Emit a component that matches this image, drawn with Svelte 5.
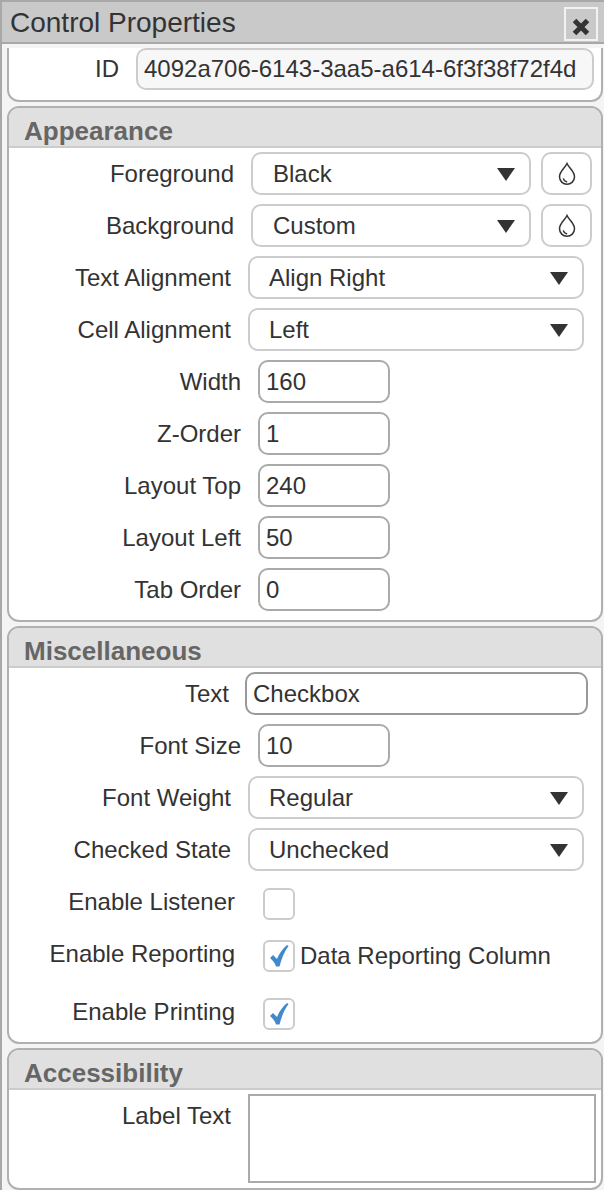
<script>
  const appearanceInputs = [
    { label: 'Width', value: '160' },
    { label: 'Z-Order', value: '1' },
    { label: 'Layout Top', value: '240' },
    { label: 'Layout Left', value: '50' },
    { label: 'Tab Order', value: '0' }
  ];
</script>

{#snippet chevron()}
  <svg class="caret" width="18" height="13" viewBox="0 0 18 13"><path d="M0 0h18L9 13z" fill="#333" /></svg>
{/snippet}

{#snippet drop()}
  <svg width="18" height="24" viewBox="0 0 18 24" fill="none" stroke="#333" stroke-width="1.5">
    <path d="M9 1.500C7 6 1.500 9 1.500 14.800a7.500 7.500 0 0 0 15 0C16.500 9 11 6 9 1.500z" />
    <path d="M5.500 17c.5 1.500 1.500 2.300 3 2.800" stroke-linecap="round" />
  </svg>
{/snippet}

{#snippet tick()}
  <svg width="19" height="22" viewBox="0 0 19 22"><path d="M0 13l3-3 4 4C9 9 12 4 17 0l1.500 1C14 7 11.500 14 9.500 21.500H6C5 18 3 15.500 0 13z" fill="#4289cb" /></svg>
{/snippet}

<div class="window">
  <header class="titlebar">
    <span class="title">Control Properties</span>
    <button class="close" aria-label="Close">
      <svg width="18" height="18" viewBox="0 0 18 18"><path d="M2.500 2.500l13 13M15.500 2.500l-13 13" stroke="#333" stroke-width="5" /></svg>
    </button>
  </header>

  <div class="content">
    <section class="panel first">
      <div class="row id-row">
        <span class="label">ID</span>
        <input class="field id-field" value="4092a706-6143-3aa5-a614-6f3f38f72f4d" readonly />
      </div>
    </section>

    <section class="panel">
      <h2>Appearance</h2>
      <div class="body">
        <div class="row color-row">
          <span class="label">Foreground</span>
          <div class="select color-select"><span>Black</span>{@render chevron()}</div>
          <button class="drop">{@render drop()}</button>
        </div>
        <div class="row color-row">
          <span class="label">Background</span>
          <div class="select color-select"><span>Custom</span>{@render chevron()}</div>
          <button class="drop">{@render drop()}</button>
        </div>
        <div class="row select-row">
          <span class="label">Text Alignment</span>
          <div class="select"><span>Align Right</span>{@render chevron()}</div>
        </div>
        <div class="row select-row">
          <span class="label">Cell Alignment</span>
          <div class="select"><span>Left</span>{@render chevron()}</div>
        </div>
        {#each appearanceInputs as item}
          <div class="row short-row">
            <span class="label">{item.label}</span>
            <input class="field short" value={item.value} />
          </div>
        {/each}
      </div>
    </section>

    <section class="panel">
      <h2>Miscellaneous</h2>
      <div class="body">
        <div class="row text-row">
          <span class="label">Text</span>
          <input class="field text-field" value="Checkbox" />
        </div>
        <div class="row short-row">
          <span class="label">Font Size</span>
          <input class="field short" value="10" />
        </div>
        <div class="row select-row">
          <span class="label">Font Weight</span>
          <div class="select"><span>Regular</span>{@render chevron()}</div>
        </div>
        <div class="row select-row">
          <span class="label">Checked State</span>
          <div class="select"><span>Unchecked</span>{@render chevron()}</div>
        </div>
        <div class="checks">
          <div class="check-row">
            <span class="label">Enable Listener</span>
            <span class="box"></span>
          </div>
          <div class="check-row">
            <span class="label">Enable Reporting</span>
            <span class="box">{@render tick()}</span>
            <span class="after">Data Reporting Column</span>
          </div>
          <div class="check-row printing">
            <span class="label">Enable Printing</span>
            <span class="box">{@render tick()}</span>
          </div>
        </div>
      </div>
    </section>

    <section class="panel last">
      <h2>Accessibility</h2>
      <div class="body">
        <div class="row area-row">
          <span class="label">Label Text</span>
          <textarea></textarea>
        </div>
      </div>
    </section>
  </div>
</div>

<style>
  :global(body) {
    background: #fff;
  }

  .window {
    width: 604px;
    height: 1190px;
    box-sizing: border-box;
    border-left: 2px solid #a8a8a8;
    overflow: hidden;
    font-family: 'Liberation Sans', Arial, sans-serif;
    font-size: 24px;
    color: #333;
    display: flex;
    flex-direction: column;
  }

  .titlebar {
    height: 44px;
    flex: none;
    box-sizing: border-box;
    border-top: 2px solid #a8a8a8;
    border-bottom: 2px solid #a8a8a8;
    background: #c9c9c9;
    display: flex;
    align-items: center;
    justify-content: space-between;
    padding: 0 6px 0 8px;
  }

  .title {
    font-size: 28px;
    line-height: 40px;
    padding-top: 2px;
  }

  .close {
    width: 34px;
    height: 34px;
    padding: 6px 0 0;
    margin-top: 4px;
    box-sizing: border-box;
    border: 2px solid #f2f2f2;
    background: transparent;
    display: flex;
    align-items: center;
    justify-content: center;
  }

  .content {
    flex: 1;
    padding-left: 5px;
    overflow: hidden;
    display: flex;
    flex-direction: column;
    gap: 4px;
    background: #f4f4f4;
  }

  .panel {
    width: 596px;
    box-sizing: border-box;
    border: 2px solid #b0b0b0;
    border-radius: 12px;
    overflow: hidden;
    flex: none;
    background: #fff;
  }

  .panel.first {
    margin-top: 4px;
    border-top: 0;
    border-radius: 0 0 12px 12px;
    height: 54px;
  }

  h2 {
    margin: 0;
    height: 40px;
    box-sizing: border-box;
    background: #e0e0e0;
    border-bottom: 2px solid #ccc;
    color: #666;
    font-size: 26px;
    font-weight: 700;
    line-height: 46px;
    padding-left: 15px;
  }

  .body {
    padding-top: 4px;
    padding-bottom: 9px;
    display: flex;
    flex-direction: column;
    gap: 9px;
  }

  .last .body {
    padding-bottom: 5px;
  }

  .row {
    display: flex;
    align-items: center;
    height: 43px;
  }

  .label {
    flex: none;
    text-align: right;
    white-space: nowrap;
    box-sizing: border-box;
    padding-top: 1px;
  }

  .field,
  .select {
    box-sizing: border-box;
    height: 43px;
    border: 2px solid #ccc;
    border-radius: 10px;
    background: #fff;
    font: inherit;
    color: inherit;
    outline: none;
  }

  .field {
    padding: 1px 6px 0;
  }

  .select {
    display: flex;
    align-items: center;
    justify-content: space-between;
    padding: 1px 14px 0 19px;
  }

  .id-row {
    height: 42px;
  }

  .id-row .label {
    width: 110px;
    padding-top: 0;
  }

  .id-field {
    margin-left: 17px;
    width: 458px;
    height: 42px;
    padding-top: 0;
    background: #f7f7f7;
  }

  .color-row .label {
    width: 225px;
  }

  .select.color-select {
    margin-left: 17px;
    width: 280px;
    padding-left: 20px;
  }

  .drop {
    margin-left: 10px;
    width: 51px;
    height: 43px;
    box-sizing: border-box;
    border: 2px solid #ccc;
    border-radius: 10px;
    background: #fff;
    padding: 0;
    display: flex;
    align-items: center;
    justify-content: center;
  }

  .select-row .label {
    width: 222px;
  }

  .select-row .select {
    margin-left: 17px;
    width: 336px;
  }

  .short-row .label {
    width: 232px;
  }

  .short {
    margin-left: 17px;
    width: 132px;
    border-color: #aaa;
  }

  .text-row .label {
    width: 220px;
  }

  .text-field {
    margin-left: 16px;
    width: 343px;
    border-color: #999;
  }

  .checks {
    margin-top: 8px;
    padding-bottom: 3px;
    display: flex;
    flex-direction: column;
    gap: 20px;
  }

  .check-row {
    display: flex;
    align-items: center;
    height: 32px;
  }

  .check-row.printing {
    margin-top: 6px;
  }

  .check-row .label {
    width: 226px;
    padding-top: 0;
    margin-top: -4px;
  }

  .box {
    margin-left: 28px;
    width: 32px;
    height: 32px;
    flex: none;
    box-sizing: border-box;
    border: 2px solid #ccc;
    border-radius: 6px;
    display: flex;
    align-items: center;
    justify-content: center;
  }

  .after {
    margin-left: 5px;
  }

  .area-row {
    height: auto;
    align-items: flex-start;
  }

  .area-row .label {
    width: 222px;
    line-height: 42px;
    padding-top: 0;
    margin-top: 1px;
  }

  textarea {
    margin-left: 17px;
    width: 348px;
    height: 89px;
    box-sizing: border-box;
    border: 2px solid #aaa;
    border-radius: 0;
    padding: 0;
    resize: none;
    outline: none;
  }
</style>
